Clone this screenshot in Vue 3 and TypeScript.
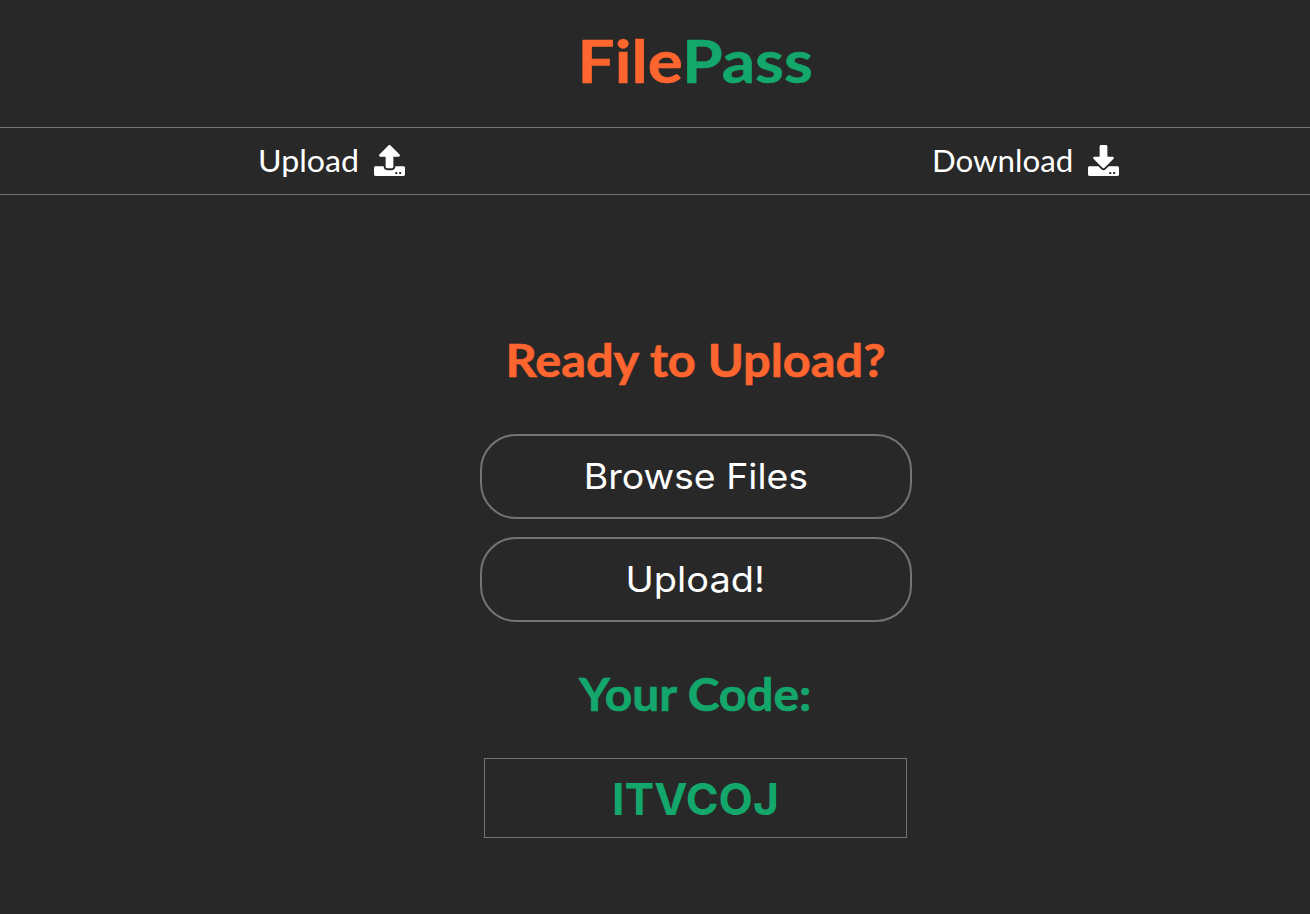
<script setup lang="ts">
import { ref } from 'vue'

const code = ref<string>('ITVCOJ')
</script>

<template>
  <div class="page">
    <header class="header">
      <h1 class="logo"><span class="logo-file">File</span><span class="logo-pass">Pass</span></h1>
    </header>

    <nav class="tabs">
      <a class="tab tab-upload">
        <span class="label label-upload">Upload</span>
        <svg class="icon" viewBox="0 0 512 512" fill="currentColor">
          <path d="M296 384h-80c-13.3 0-24-10.7-24-24V192h-87.7c-17.8 0-26.7-21.5-14.1-34.1L242.3 5.7c7.5-7.5 19.8-7.5 27.3 0l152.2 152.2c12.6 12.6 3.7 34.1-14.1 34.1H320v168c0 13.3-10.7 24-24 24zm216-8v112c0 13.3-10.7 24-24 24H24c-13.3 0-24-10.7-24-24V376c0-13.3 10.7-24 24-24h136v8c0 30.9 25.1 56 56 56h80c30.9 0 56-25.1 56-56v-8h136c13.3 0 24 10.7 24 24zm-124 88c0-11-9-20-20-20s-20 9-20 20 9 20 20 20 20-9 20-20zm64 0c0-11-9-20-20-20s-20 9-20 20 9 20 20 20 20-9 20-20z" />
        </svg>
      </a>
      <a class="tab tab-download">
        <span class="label label-download">Download</span>
        <svg class="icon" viewBox="0 0 512 512" fill="currentColor">
          <path d="M216 0h80c13.3 0 24 10.7 24 24v168h87.7c17.8 0 26.7 21.5 14.1 34.1L269.7 378.3c-7.5 7.5-19.8 7.5-27.3 0L90.1 226.1c-12.6-12.6-3.7-34.1 14.1-34.1H192V24c0-13.3 10.7-24 24-24zm296 376v112c0 13.3-10.7 24-24 24H24c-13.3 0-24-10.7-24-24V376c0-13.3 10.7-24 24-24h146.7l49 49c20.1 20.1 52.5 20.1 72.6 0l49-49H488c13.3 0 24 10.7 24 24zm-124 88c0-11-9-20-20-20s-20 9-20 20 9 20 20 20 20-9 20-20zm64 0c0-11-9-20-20-20s-20 9-20 20 9 20 20 20 20-9 20-20z" />
        </svg>
      </a>
    </nav>

    <main class="content">
      <h2 class="title title-ready">Ready to Upload?</h2>
      <button class="btn btn-browse" type="button"><span>Browse Files</span></button>
      <button class="btn btn-upload" type="button"><span>Upload!</span></button>
      <h2 class="title title-code">Your Code:</h2>
      <div class="code">{{ code }}</div>
    </main>
  </div>
</template>

<style>
html,
body {
  margin: 0;
  background: #282828;
}
</style>

<style scoped>
.page {
  height: 914px;
  overflow: hidden;
  background: #282828;
  font-family: Lato, 'Open Sans', sans-serif;
  color: #fff;
}

.header {
  height: 127px;
  padding-left: 81px;
  display: flex;
  justify-content: center;
}

.logo {
  margin: 24px 0 0;
  height: 72px;
  font-size: 60px;
  line-height: 72px;
  font-weight: 700;
  white-space: nowrap;
  transform: scaleX(1.097);
  -webkit-text-stroke: 0.5px currentColor;
}

.logo-file {
  color: #ff652f;
  -webkit-text-stroke-color: #ff652f;
}

.logo-pass {
  color: #14a76c;
  margin-left: -1px;
  -webkit-text-stroke-color: #14a76c;
}

.tabs {
  box-sizing: border-box;
  height: 68px;
  border-top: 1px solid #747474;
  border-bottom: 1px solid #747474;
  display: flex;
  align-items: center;
}

.tab {
  box-sizing: border-box;
  display: flex;
  align-items: center;
  padding-left: 258px;
  white-space: nowrap;
}

.tab-upload {
  width: 674px;
}

.label {
  font-size: 30px;
  line-height: 36px;
  margin-top: -2px;
  transform-origin: left center;
}

.label-upload {
  width: 116px;
  transform: scaleX(1.072);
}

.label-download {
  width: 156px;
  transform: scaleX(1.042);
}

.icon {
  display: block;
  width: 31px;
  height: 31px;
  margin-top: -2px;
}

.content {
  padding-left: 81px;
  display: flex;
  flex-direction: column;
  align-items: center;
}

.title {
  margin: 0;
  font-size: 45px;
  line-height: 54px;
  font-weight: 700;
  white-space: nowrap;
  -webkit-text-stroke: 0.6px currentColor;
}

.title-ready {
  margin-top: 138px;
  color: #ff652f;
  transform: scaleX(1.083);
}

.title-code {
  margin-top: 45px;
  color: #14a76c;
  transform: scaleX(1.064);
}

.btn {
  box-sizing: border-box;
  width: 432px;
  height: 85px;
  padding: 0 0 2px;
  border: 2px solid #747474;
  border-radius: 36px;
  background: transparent;
  color: #fff;
  font-family: Inter, 'Open Sans', sans-serif;
  font-size: 35px;
  line-height: 44px;
  font-weight: 400;
}

.btn span {
  display: inline-block;
}

.btn-browse {
  margin-top: 47px;
}

.btn-browse span {
  transform: scaleX(1.07);
}

.btn-upload {
  margin-top: 18px;
}

.btn-upload span {
  transform: scaleX(1.085);
}

.code {
  box-sizing: border-box;
  width: 423px;
  height: 80px;
  margin-top: 37px;
  border: 1px solid #747474;
  color: #14a76c;
  font-family: Inter, 'Open Sans', sans-serif;
  font-size: 44.5px;
  line-height: 80px;
  font-weight: 700;
  text-align: center;
}
</style>
